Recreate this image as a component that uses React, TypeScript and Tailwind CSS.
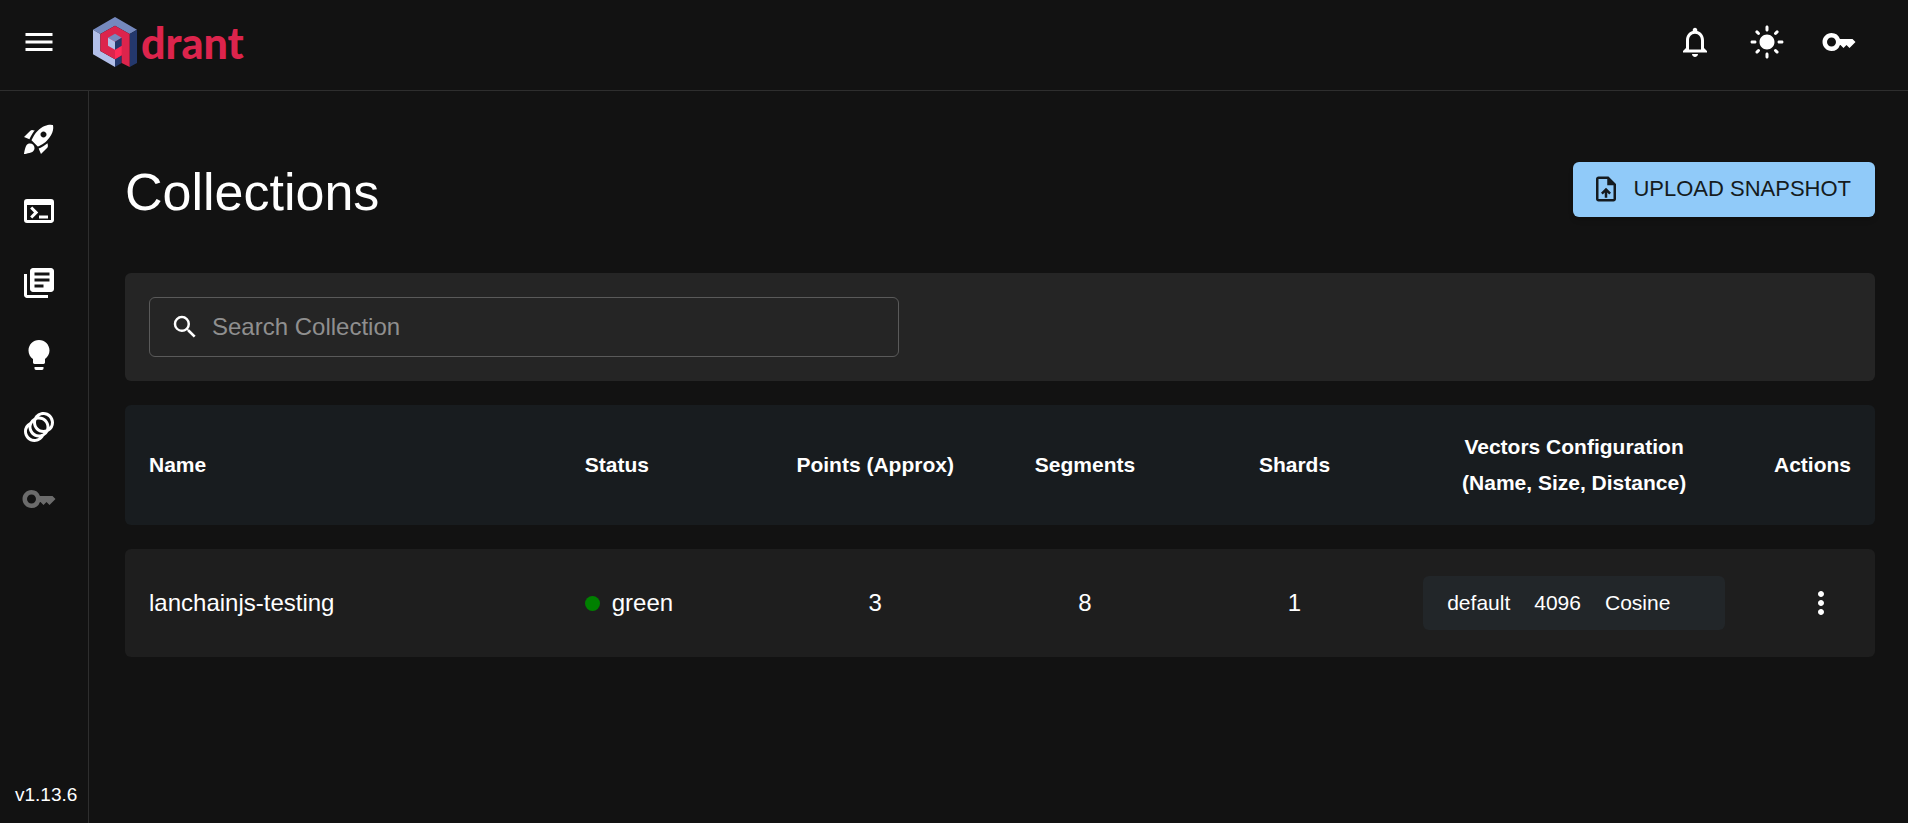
import type { ReactNode } from 'react';
import {
  MdAnimation,
  MdKey,
  MdLibraryBooks,
  MdLightMode,
  MdMenu,
  MdMoreVert,
  MdNotificationsNone,
  MdSearch,
  MdTerminal,
  MdUploadFile,
} from 'react-icons/md';

function RocketIcon() {
  return (
    <svg viewBox="0 0 24 24" className="h-9 w-9" fill="currentColor" aria-hidden="true">
      <path d="M9.19 6.35c-2.04 2.29-3.44 5.58-3.57 5.89L2 10.69l4.05-4.05c.47-.47 1.15-.68 1.81-.55zM11.17 17s3.74-1.55 5.89-3.7c5.4-5.4 4.5-9.62 4.21-10.57-.95-.3-5.17-1.19-10.57 4.21C8.55 9.09 7 12.83 7 12.83zm6.48-2.19c-2.29 2.04-5.58 3.44-5.89 3.57L13.31 22l4.05-4.05c.47-.47.68-1.15.55-1.81zM9 18c0 .83-.34 1.58-.88 2.12C6.94 21.3 2 22 2 22s.7-4.94 1.88-6.12C4.42 15.34 5.17 15 6 15c1.66 0 3 1.34 3 3m4-9c0-1.1.9-2 2-2s2 .9 2 2-.9 2-2 2-2-.9-2-2" />
    </svg>
  );
}

function BulbIcon() {
  return (
    <svg viewBox="0 0 24 24" className="h-9 w-9" fill="currentColor" aria-hidden="true">
      <path d="M9 21c0 .5.4 1 1 1h4c.6 0 1-.5 1-1v-1H9zm3-19C8.1 2 5 5.1 5 9c0 2.4 1.2 4.5 3 5.7V17c0 .5.4 1 1 1h6c.6 0 1-.5 1-1v-2.3c1.8-1.3 3-3.4 3-5.7 0-3.9-3.1-7-7-7" />
    </svg>
  );
}

function Logo() {
  return (
    <a href="#/" aria-label="qdrant" className="flex items-center gap-1">
      <svg viewBox="0 0 132 150" className="h-[50px] w-11" aria-hidden="true">
        <polygon points="66,0 132,38 110,51 66,26 22,51 0,38" fill="#7589be" />
        <polygon points="0,38 22,51 22,102 66,127 66,150 0,112" fill="#b2bfe8" />
        <polygon points="132,38 132,138 110,150 110,51" fill="#24386c" />
        <polygon points="66,127 86,115 86,138 66,150" fill="#24386c" />
        <polygon points="66,26 110,51 110,150 86,138 86,115 66,127 22,102 22,51" fill="#dc244c" />
        <polygon points="66,98 86,86 86,115 66,127" fill="#ff2b57" />
        <polygon points="66,50 86,62 66,74 45,62" fill="#7589be" />
        <polygon points="45,62 66,74 66,98 45,86" fill="#b2bfe8" />
        <polygon points="86,62 86,86 66,98 66,74" fill="#24386c" />
      </svg>
      <span className="pt-0.5 font-['Lato'] text-[43px] leading-[50px] font-black text-[#dc244c]">drant</span>
    </a>
  );
}

function IconButton({ label, children }: { label: string; children: ReactNode }) {
  return (
    <button type="button" aria-label={label} className="flex h-[72px] w-[72px] items-center justify-center text-4xl">
      {children}
    </button>
  );
}

const navItems = [
  { label: 'Welcome', icon: <RocketIcon /> },
  { label: 'Console', icon: <MdTerminal /> },
  { label: 'Collections', icon: <MdLibraryBooks /> },
  { label: 'Tutorial', icon: <BulbIcon /> },
  { label: 'Datasets', icon: <MdAnimation /> },
];

const collections = [
  {
    name: 'lanchainjs-testing',
    status: 'green',
    points: 3,
    segments: 8,
    shards: 1,
    vector: { name: 'default', size: 4096, distance: 'Cosine' },
  },
];

export default function App() {
  return (
    <div className="flex min-h-screen flex-col bg-[#121212] font-['Liberation_Sans',Arial,sans-serif] text-2xl text-white">
      <header className="flex h-[91px] items-center justify-between border-b border-[#2e2e2e] pr-[33px] pb-1.5">
        <div className="flex items-center gap-4.5">
          <div className="pl-[3px]">
            <IconButton label="Open menu">
              <MdMenu />
            </IconButton>
          </div>
          <Logo />
        </div>
        <div className="flex">
          <IconButton label="Notifications">
            <MdNotificationsNone />
          </IconButton>
          <IconButton label="Toggle theme">
            <MdLightMode />
          </IconButton>
          <IconButton label="API key">
            <MdKey />
          </IconButton>
        </div>
      </header>

      <div className="flex flex-1">
        <aside className="flex w-[89px] shrink-0 flex-col justify-between border-r border-[#2e2e2e] pt-3 pb-3.5">
          <nav className="flex flex-col pl-[3px]">
            {navItems.map((item) => (
              <a
                key={item.label}
                href={`#/${item.label.toLowerCase()}`}
                aria-label={item.label}
                className="flex h-[72px] w-[72px] items-center justify-center text-4xl"
              >
                {item.icon}
              </a>
            ))}
            <button
              type="button"
              disabled
              aria-label="Access tokens"
              className="flex h-[72px] w-[72px] items-center justify-center text-4xl text-[#6b6b6b]"
            >
              <MdKey />
            </button>
          </nav>
          <p className="pl-[15px] text-[19px] leading-7">v1.13.6</p>
        </aside>

        <main className="min-w-0 flex-1 pt-[71px] pr-[33px] pl-9">
          <div className="flex items-start justify-between">
            <h1 className="text-[52px] leading-[61px]">Collections</h1>
            <button
              type="button"
              className="flex h-[55px] items-center gap-3 rounded-md bg-[#90caf9] pr-6 pb-0.5 pl-4.5 text-[22px] text-[#151b20] shadow-md"
            >
              <MdUploadFile className="text-3xl" />
              UPLOAD SNAPSHOT
            </button>
          </div>

          <div className="mt-[50px] rounded-md bg-[#252525] p-6">
            <label className="flex h-[60px] w-[750px] max-w-full items-center gap-3 rounded-md border border-[#5a5a5a] px-5">
              <MdSearch className="shrink-0 text-3xl" />
              <input
                type="text"
                aria-label="Search Collection"
                placeholder="Search Collection"
                className="min-w-0 flex-1 bg-transparent outline-none placeholder:text-[#8f8f8f]"
              />
            </label>
          </div>

          <table className="w-full border-separate border-spacing-x-0 border-spacing-y-6">
            <thead className="text-[21px] leading-9">
              <tr className="h-[120px] bg-[#181c1f]">
                <th className="w-[25%] rounded-l-md px-6 text-left">Name</th>
                <th className="w-[12%] px-6 text-left">Status</th>
                <th className="w-[12%] px-6 whitespace-nowrap">Points (Approx)</th>
                <th className="w-[12%] px-6">Segments</th>
                <th className="w-[12%] px-6">Shards</th>
                <th className="w-[20%] px-6">
                  Vectors Configuration
                  <br />
                  (Name, Size, Distance)
                </th>
                <th className="min-w-[126px] rounded-r-md px-6 text-right">Actions</th>
              </tr>
            </thead>
            <tbody>
              {collections.map((c) => (
                <tr key={c.name} className="h-[108px] bg-[#1e1e1e]">
                  <td className="rounded-l-md px-6">
                    <a href={`#/collections/${c.name}`}>{c.name}</a>
                  </td>
                  <td className="px-6">
                    <div className="flex items-center gap-3">
                      <span className="h-[15px] w-[15px] rounded-full bg-[#008000]" />
                      {c.status}
                    </div>
                  </td>
                  <td className="px-6 text-center">{c.points}</td>
                  <td className="px-6 text-center">{c.segments}</td>
                  <td className="px-6 text-center">{c.shards}</td>
                  <td className="px-6">
                    <div className="flex h-[54px] items-center gap-6 rounded-md bg-[#222629] px-6 text-[21px]">
                      <span>{c.vector.name}</span>
                      <span>{c.vector.size}</span>
                      <span>{c.vector.distance}</span>
                    </div>
                  </td>
                  <td className="rounded-r-md px-6">
                    <button
                      type="button"
                      aria-label="More actions"
                      className="ml-auto flex h-15 w-15 items-center justify-center text-4xl"
                    >
                      <MdMoreVert />
                    </button>
                  </td>
                </tr>
              ))}
            </tbody>
          </table>
        </main>
      </div>
    </div>
  );
}
